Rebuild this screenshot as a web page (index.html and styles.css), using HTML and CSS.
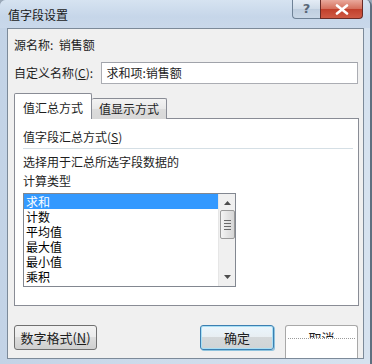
FILE: index.html
```html
<!DOCTYPE html>
<html lang="zh">
<head>
<meta charset="utf-8">
<title>值字段设置</title>
<link rel="stylesheet" href="styles.css">
</head>
<body>
<div class="window">
  <div class="titlebar">
    <span class="title">值字段设置</span>
    <div class="controls">
      <div class="btn-help">?</div>
      <div class="btn-close">
        <svg width="14" height="11" viewBox="0 0 14 11"><path d="M2 1.5 L12 9.5 M12 1.5 L2 9.5" stroke="#fff" stroke-width="2.6" stroke-linecap="round"/></svg>
      </div>
    </div>
  </div>
  <div class="client">
    <div class="row-source">源名称:&nbsp;&nbsp;销售额</div>
    <div class="row-name">
      <label class="name-label">自定义名称(<u>C</u>):</label>
      <div class="input">求和项:销售额</div>
    </div>
    <div class="tabs">
      <div class="tab active">值汇总方式</div>
      <div class="tab">值显示方式</div>
    </div>
    <div class="panel">
      <div class="group-title">值字段汇总方式(<u>S</u>)</div>
      <div class="sep"></div>
      <div class="desc">选择用于汇总所选字段数据的<br>计算类型</div>
      <div class="listbox">
        <ul class="items">
          <li class="sel">求和</li>
          <li>计数</li>
          <li>平均值</li>
          <li>最大值</li>
          <li>最小值</li>
          <li>乘积</li>
        </ul>
        <div class="scrollbar">
          <svg class="arrow" width="7" height="4" viewBox="0 0 7 4"><path d="M0 4 L3.5 0 L7 4 Z" fill="#4d4d4d"/></svg>
          <div class="thumb"><span></span><span></span><span></span><span></span></div>
          <div class="track"></div>
          <svg class="arrow" width="7" height="4" viewBox="0 0 7 4"><path d="M0 0 L3.5 4 L7 0 Z" fill="#4d4d4d"/></svg>
        </div>
      </div>
    </div>
    <div class="buttons">
      <div class="button">数字格式(<u>N</u>)</div>
      <div class="spacer"></div>
      <div class="button default">确定</div>
      <div class="button cancel"><span class="cut">取消</span></div>
    </div>
  </div>
</div>
</body>
</html>
```

FILE: styles.css
```css
* { box-sizing: border-box; }
html, body { margin: 0; padding: 0; }
body {
  font-family: "Noto Sans CJK SC", "Noto Sans", sans-serif;
  font-size: 12px;
  color: #1e1e1e;
  background: #9aa8b8;
}
u { text-decoration: underline; text-underline-offset: 1px; }
.window {
  width: 372px;
  height: 364px;
  display: flex;
  flex-direction: column;
  background: linear-gradient(90deg, #c3d3e6 0px, #cddbeb 40%, #d6e2ef 100%);
  border-right: 2px solid #5f6f80;
  border-radius: 6px 6px 0 0;
  overflow: hidden;
}
.titlebar {
  height: 28px;
  display: flex;
  align-items: flex-start;
  background: linear-gradient(180deg, #d6e3f1 0%, #c6d6e9 60%, #c9d8ea 100%);
}
.title {
  padding: 7px 0 0 8px;
  line-height: 16px;
  font-size: 12px;
  color: #1a1a1a;
}
.controls {
  margin-left: auto;
  margin-right: 7px;
  display: flex;
}
.btn-help {
  width: 28px;
  height: 19px;
  border: 1px solid #6f8296;
  border-top: none;
  border-right: none;
  border-radius: 0 0 0 4px;
  background: linear-gradient(180deg, #e4ecf5 0%, #cfdbe8 50%, #bfcedf 51%, #c9d7e6 100%);
  color: #5a6777;
  font-family: "DejaVu Sans", sans-serif;
  font-size: 13px;
  font-weight: bold;
  text-align: center;
  line-height: 18px;
}
.btn-close {
  width: 43px;
  height: 19px;
  border: 1px solid #6a2b26;
  border-top: none;
  border-radius: 0 0 4px 0;
  background: linear-gradient(180deg, #e9a99c 0%, #d5705d 48%, #c1402c 52%, #cf5a45 100%);
  display: flex;
  align-items: center;
  justify-content: center;
}
.client {
  flex: 1;
  margin: 0 6px 5px 7px;
  border: 1px solid #7c8a99;
  background: #f0f0f0;
  padding: 8px 5px 0 6px;
  display: flex;
  flex-direction: column;
}
.row-source { line-height: 16px; height: 16px; }
.row-name {
  display: flex;
  align-items: center;
  margin-top: 9px;
  height: 22px;
}
.name-label { width: 88px; line-height: 16px; }
.input {
  width: 258px;
  height: 22px;
  border: 1px solid #abadb3;
  border-top-color: #a0a3aa;
  background: #fff;
  padding: 2px 0 0 4px;
  line-height: 16px;
}
.tabs {
  display: flex;
  align-items: flex-end;
  margin-top: 9px;
  height: 26px;
  position: relative;
  z-index: 1;
  margin-bottom: -1px;
}
.tab {
  height: 21px;
  width: 75px;
  border: 1px solid #898c95;
  border-bottom: none;
  border-left: none;
  background: linear-gradient(180deg, #f3f3f3 0%, #e8e8e8 50%, #dcdcdc 51%, #d8d8d8 100%);
  text-align: center;
  line-height: 20px;
  border-radius: 2px 2px 0 0;
}
.tab.active {
  width: 78px;
  height: 26px;
  border-left: 1px solid #898c95;
  background: #fff;
  line-height: 28px;
}
.panel {
  width: 345px;
  height: 188px;
  border: 1px solid #898c95;
  background: #fff;
  padding: 9px 5px 0 8px;
}
.group-title { line-height: 18px; }
.sep {
  height: 1px;
  background: #d5dfe5;
  margin-top: 2px;
}
.desc {
  line-height: 19px;
  margin-top: 3px;
}
.listbox {
  margin-top: 3px;
  width: 213px;
  height: 94px;
  border: 1px solid #828790;
  display: flex;
  background: #fff;
}
.items {
  list-style: none;
  margin: 0;
  padding: 0;
  flex: 1;
}
.items li {
  height: 15px;
  line-height: 15px;
  padding-left: 2px;
  font-size: 12px;
  color: #000;
}
.items li.sel {
  background: #3399ff;
  color: #fff;
}
.scrollbar {
  width: 17px;
  background: #f0f0f0;
  border-left: 1px solid #e6e6e6;
  display: flex;
  flex-direction: column;
  align-items: center;
}
.arrow { margin: 7px 0 5px; flex: none; }
.scrollbar .arrow:last-child { margin: 5px 0 7px; }
.thumb {
  width: 15px;
  height: 29px;
  border: 1px solid #9a9a9a;
  border-radius: 2px;
  background: linear-gradient(90deg, #f4f4f4 0%, #e4e4e4 50%, #d6d6d6 100%);
  display: flex;
  flex-direction: column;
  align-items: center;
  justify-content: center;
  gap: 2px;
}
.thumb span {
  width: 7px;
  height: 1px;
  background: #6a6a6a;
}
.track { flex: 1; }
.buttons {
  display: flex;
  margin-top: 19px;
}
.spacer { flex: 1; }
.button {
  height: 25px;
  width: 83px;
  border: 1px solid #707070;
  border-radius: 3px;
  background: linear-gradient(180deg, #f2f2f2 0%, #ebebeb 49%, #dddddd 50%, #cfcfcf 100%);
  text-align: center;
  line-height: 23px;
  font-size: 13px;
}
.button.default {
  width: 74px;
  border-color: #3c7fb1;
  box-shadow: inset 0 0 0 1px #a8dff5, 1px 1px 0 #8fc3dd;
  background: linear-gradient(180deg, #eaf6fd 0%, #e8eef2 49%, #d4d8da 50%, #d0d4d6 100%);
  margin-right: 11px;
}
.button.cancel {
  width: 73px;
  height: 33px;
  background: #fff;
  border-color: #a8a8a8;
  border-bottom: none;
  border-radius: 3px 3px 0 0;
  overflow: hidden;
}
.cut {
  display: block;
  height: 13px;
  margin: 0 2px;
  overflow: hidden;
  line-height: 16px;
  padding-top: 4px;
  border-bottom: 1px dotted #9a9a9a;
}
```
